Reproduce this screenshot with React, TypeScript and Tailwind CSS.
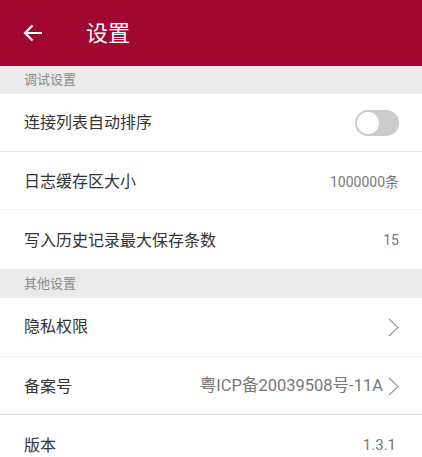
import type { ReactNode } from "react";

const font = { fontFamily: "Roboto, 'Noto Sans CJK SC', sans-serif" };

function Chevron() {
  return (
    <svg width="11" height="19" viewBox="0 0 11 19" fill="none" className="ml-[5px] shrink-0">
      <path d="M1 1 L10 9.5 L1 18" stroke="#9a9a9a" strokeWidth="1.2" />
    </svg>
  );
}

function Toggle() {
  return (
    <div className="relative w-[44px] h-[26px] rounded-full bg-[#cccccc]">
      <div className="absolute left-[2px] top-[2px] w-[22px] h-[22px] rounded-full bg-white" />
    </div>
  );
}

function SectionHeader({ title, tall = false }: { title: string; tall?: boolean }) {
  return (
    <div
      className={`${tall ? "h-[29px]" : "h-[28px]"} bg-[#ebebeb] flex items-center px-[24px] text-[13px] text-[#8a8a8a]`}
    >
      {title}
    </div>
  );
}

function Row({
  label,
  right,
  divider = "border-[#f4f4f4]",
  h = "h-[58px]",
  pt = "",
}: {
  label: string;
  right?: ReactNode;
  divider?: string;
  h?: string;
  pt?: string;
}) {
  return (
    <div className={`${h} ${pt} flex items-center justify-between pl-[24px] pr-[23px] border-b ${divider}`}>
      <span className="text-[16px] text-[#333333]">{label}</span>
      {right}
    </div>
  );
}

function Value({ children }: { children: ReactNode }) {
  return <span className="text-[14px] text-[#777777]">{children}</span>;
}

export default function App() {
  return (
    <div className="w-[422px] h-[457px] overflow-hidden bg-white" style={font}>
      {/* app bar */}
      <div className="h-[66px] bg-[#a00832] flex items-center pl-[23px]">
        <svg width="20" height="18" viewBox="0 0 20 18" fill="none">
          <path d="M19 9 H2 M9.5 1.5 L2 9 L9.5 16.5" stroke="white" strokeWidth="2.2" />
        </svg>
        <span className="ml-[43px] text-[22px] text-white">设置</span>
      </div>

      <SectionHeader title="调试设置" />
      <Row label="连接列表自动排序" right={<Toggle />} divider="border-[#e3e3e3]" />
      <Row label="日志缓存区大小" right={<Value>1000000条</Value>} pt="pt-[3px]" />
      <Row
        label="写入历史记录最大保存条数"
        right={<Value>15</Value>}
        divider="border-transparent"
        h="h-[59px]"
        pt="pt-[3px]"
      />

      <SectionHeader title="其他设置" tall />
      <Row label="隐私权限" right={<Chevron />} h="h-[59px]" />
      <Row
        label="备案号"
        right={
          <div className="flex items-center">
            <span className="text-[16.5px] text-[#777777]">粤ICP备20039508号-11A</span>
            <Chevron />
          </div>
        }
        divider="border-[#e3e3e3]"
        pt="pt-[2px]"
      />
      <Row
        label="版本"
        right={<span className="text-[15px] text-[#777777] mr-[3px]">1.3.1</span>}
        pt="pt-[4px]"
      />
    </div>
  );
}
